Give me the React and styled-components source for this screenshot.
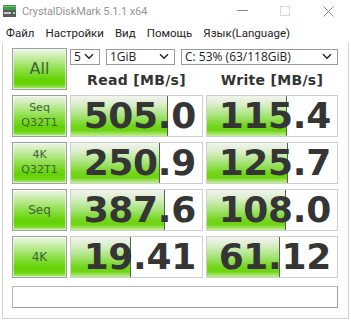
import React from "react";
import styled, { createGlobalStyle } from "styled-components";

const Global = createGlobalStyle`
  html, body { margin: 0; padding: 0; background: #fff; }
  body { font-family: Roboto, "Noto Sans", sans-serif; }
`;

const Window = styled.div`
  width: 351px;
  height: 320px;
  background: #fff;
  display: flex;
  flex-direction: column;
  overflow: hidden;
`;

const TitleBar = styled.div`
  height: 22px;
  display: flex;
  align-items: center;
  padding-left: 3px;
  color: #959595;
  font-family: Roboto, sans-serif;
  font-size: 11px;
`;

const TitleText = styled.span`
  margin-left: 6px;
  flex: 1;
  letter-spacing: -0.1px;
`;

const Controls = styled.div`
  display: flex;
  align-items: center;
  height: 22px;
`;

const CtrlBtn = styled.div`
  width: ${(p) => p.$w}px;
  height: 22px;
  display: flex;
  align-items: center;
  justify-content: center;
`;

const MenuBar = styled.div`
  height: 21px;
  display: flex;
  align-items: center;
  padding-left: 6px;
  gap: 11px;
  font-family: Roboto, sans-serif;
  font-size: 11.5px;
  color: #1e1e1e;
`;

const MenuItem = styled.span``;

const Frame = styled.div`
  flex: 1;
  margin: 0 2px 1px 2px;
  border: 1px solid #d2d2d2;
  border-top: none;
  padding: 5px 0 0 9px;
  display: grid;
  grid-template-columns: 55px 133px 132px;
  grid-template-rows: 17px 20px 42px 42px 42px 42px 25px;
  column-gap: 3px;
  row-gap: 5px;
  align-content: start;
`;

const ActionButton = styled.div`
  grid-row: ${(p) => p.$row || "auto"};
  box-sizing: border-box;
  border: 1px solid #9e9e9e;
  box-shadow: inset 0 0 0 1px rgba(255, 255, 255, 0.55);
  background: linear-gradient(
    to bottom,
    #eef5e8 0%,
    #c4eca2 22%,
    #8ee04a 50%,
    #62d202 78%,
    #6fd616 90%,
    #b4ea8a 100%
  );
  display: flex;
  align-items: center;
  justify-content: center;
  text-align: center;
  font-family: "DejaVu Sans", sans-serif;
  color: #40633a;
  font-size: ${(p) => p.$size || 11}px;
  line-height: 1.35;
  white-space: pre-line;
`;

const Selects = styled.div`
  grid-column: 2 / 4;
  display: flex;
  gap: 6px;
  align-items: center;
`;

const Select = styled.div`
  box-sizing: border-box;
  width: ${(p) => p.$w}px;
  height: 16px;
  border: 1px solid #9a9a9a;
  background: #fff;
  display: flex;
  align-items: center;
  justify-content: space-between;
  padding: 0 5px 0 3px;
  font-family: "Open Sans", "Noto Sans", sans-serif;
  font-size: 12px;
  color: #222;
`;

const Header = styled.div`
  display: flex;
  align-items: center;
  justify-content: center;
  font-family: "DejaVu Sans", sans-serif;
  font-weight: bold;
  font-size: 14px;
  color: #333;
  letter-spacing: 0.3px;
`;

const ValueCell = styled.div`
  position: relative;
  box-sizing: border-box;
  border: 1px solid #cfcfcf;
  background: #fff;
  display: flex;
  align-items: center;
  justify-content: flex-end;
  padding-right: 6px;
  overflow: hidden;
`;

const Bar = styled.div`
  position: absolute;
  left: 0;
  top: 0;
  bottom: 0;
  border-right: 1px solid #4f6b3e;
  background: linear-gradient(
    to bottom,
    #f2f3f0 0%,
    #dcefcc 20%,
    #a8e47c 48%,
    #72d51a 75%,
    #6ed412 86%,
    #c2ef9c 100%
  );
`;

const Value = styled.span`
  position: relative;
  font-family: "DejaVu Sans", sans-serif;
  font-weight: bold;
  font-size: 36px;
  line-height: 40px;
  color: #353535;
  letter-spacing: -0.3px;
`;

const Status = styled.div`
  grid-column: 1 / 4;
  margin-top: 3px;
  box-sizing: border-box;
  border: 1px solid #b8b8b8;
  border-right-color: #a0a0a0;
  border-bottom-color: #a0a0a0;
  background: #fff;
`;

const Chevron = () => (
  <svg width="10" height="7" viewBox="0 0 10 7">
    <path d="M1 1.2 L5 5.2 L9 1.2" fill="none" stroke="#222" strokeWidth="1.4" />
  </svg>
);

const AppIcon = () => (
  <svg width="13" height="12" viewBox="0 0 13 12">
    <rect x="0" y="0" width="13" height="5" fill="#3f9a45" />
    <rect x="0" y="1" width="13" height="1" fill="#6cc46e" />
    <rect x="0" y="5" width="13" height="7" fill="#5b5b5b" />
    <rect x="1" y="7" width="7" height="2" fill="#c8c8c8" />
    <rect x="10" y="7" width="2" height="2" fill="#9be39b" />
  </svg>
);

const barWidth = (v) => Math.round(133 * (0.198 * Math.log10(v) + 0.185));

const rows = [
  { label: "Seq\nQ32T1", size: 11, read: "505.0", write: "115.4" },
  { label: "4K\nQ32T1", size: 11, read: "250.9", write: "125.7" },
  { label: "Seq", size: 12, read: "387.6", write: "108.0" },
  { label: "4K", size: 12, read: "19.41", write: "61.12" },
];

function Cell({ value }) {
  return (
    <ValueCell>
      <Bar style={{ width: barWidth(parseFloat(value)) }} />
      <Value>{value}</Value>
    </ValueCell>
  );
}

export default function App() {
  return (
    <>
      <Global />
      <Window>
        <TitleBar>
          <AppIcon />
          <TitleText>CrystalDiskMark 5.1.1 x64</TitleText>
          <Controls>
            <CtrlBtn $w={46}>
              <svg width="11" height="2"><rect width="11" height="1" fill="#8a8a8a" /></svg>
            </CtrlBtn>
            <CtrlBtn $w={40}>
              <svg width="10" height="10"><rect x="0.5" y="0.5" width="9" height="9" fill="none" stroke="#d8d8d8" /></svg>
            </CtrlBtn>
            <CtrlBtn $w={46}>
              <svg width="11" height="11"><path d="M0.5 0.5 L10.5 10.5 M10.5 0.5 L0.5 10.5" stroke="#8a8a8a" strokeWidth="1" /></svg>
            </CtrlBtn>
          </Controls>
        </TitleBar>
        <MenuBar>
          <MenuItem>Файл</MenuItem>
          <MenuItem>Настройки</MenuItem>
          <MenuItem>Вид</MenuItem>
          <MenuItem>Помощь</MenuItem>
          <MenuItem>Язык(Language)</MenuItem>
        </MenuBar>
        <Frame>
          <ActionButton $row="1 / 3" $size={16}>All</ActionButton>
          <Selects>
            <Select $w={30}>5<Chevron /></Select>
            <Select $w={69}>1GiB<Chevron /></Select>
            <Select $w={157}>C: 53% (63/118GiB)<Chevron /></Select>
          </Selects>
          <Header>Read [MB/s]</Header>
          <Header>Write [MB/s]</Header>
          {rows.map((r) => (
            <React.Fragment key={r.label}>
              <ActionButton $size={r.size}>{r.label}</ActionButton>
              <Cell value={r.read} />
              <Cell value={r.write} />
            </React.Fragment>
          ))}
          <Status />
        </Frame>
      </Window>
    </>
  );
}
